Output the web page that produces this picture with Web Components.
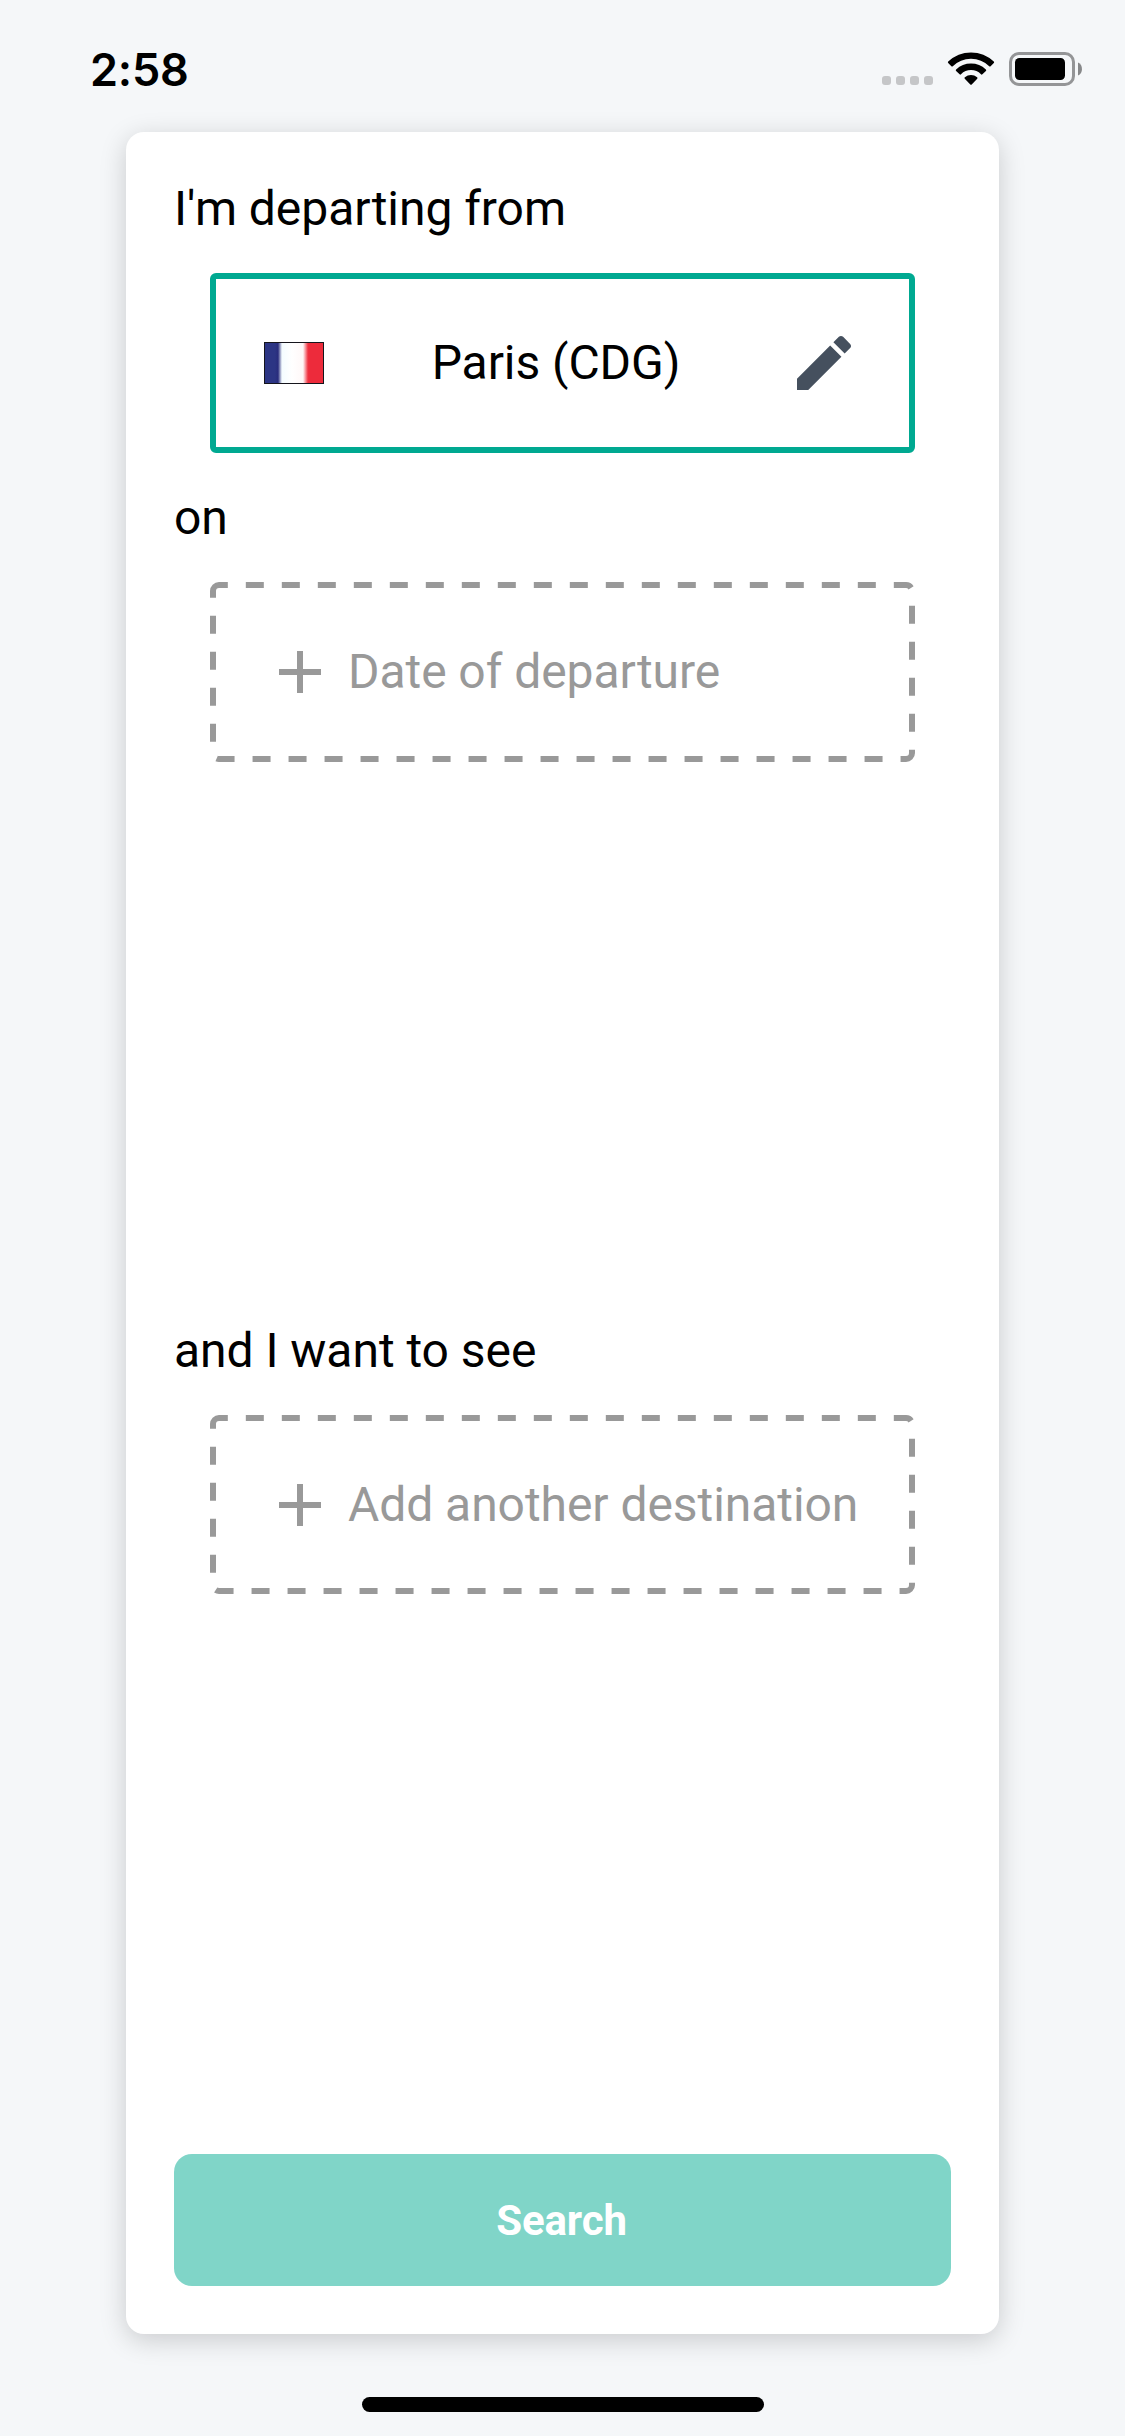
<!DOCTYPE html>
<html lang="en">
<head>
<meta charset="utf-8">
<title>Trip search</title>
<style>
  html, body { margin: 0; height: 100%; }
  body { background: #f5f7f9; font-family: Roboto, sans-serif; color: #000; }
</style>
</head>
<body>
<trip-screen>
  <status-bar slot="status" time="2:58"></status-bar>
  <trip-card>
    <form-section label="I'm departing from">
      <place-field>Paris (CDG)</place-field>
    </form-section>
    <form-section label="on" style="height:797px">
      <add-field height="180">Date of departure</add-field>
    </form-section>
    <form-section label="and I want to see">
      <add-field height="179">Add another destination</add-field>
    </form-section>
    <search-button slot="action">Search</search-button>
  </trip-card>
</trip-screen>

<script>
function define(name, html, init) {
  customElements.define(name, class extends HTMLElement {
    connectedCallback() {
      if (this.shadowRoot) return;
      const root = this.attachShadow({ mode: 'open' });
      root.innerHTML = html;
      if (init) init(this, root);
    }
  });
}

define('trip-screen', `
  <style>
    :host { display: flex; flex-direction: column; width: 1125px; height: 2436px; background: #f5f7f9; overflow: hidden; }
    main { padding: 0 126px; height: 2202px; display: flex; }
    ::slotted(trip-card) { flex: 1; }
    .home { width: 402px; height: 15px; border-radius: 8px; background: #000; margin: 63px 0 0 362px; }
  </style>
  <slot name="status"></slot>
  <main><slot></slot></main>
  <div class="home"></div>`);

define('status-bar', `
  <style>
    :host { display: flex; justify-content: space-between; box-sizing: border-box; height: 132px; padding: 51px 43px 0 90px; }
    .time { font: 600 45px/54px Inter, sans-serif; margin-top: -8px; letter-spacing: -0.2px; }
    .icons { display: flex; align-items: flex-start; }
    .dots { display: flex; gap: 5px; margin: 25px 14px 0 0; }
    .dots i { width: 9px; height: 9px; border-radius: 3px; background: #c5c6c8; }
    svg { display: block; }
    .battery { margin-left: 14px; }
  </style>
  <div class="time"></div>
  <div class="icons">
    <div class="dots"><i></i><i></i><i></i><i></i></div>
    <svg width="48" height="36" viewBox="0 0 48 36">
      <g transform="translate(24 34)" stroke="#000" stroke-width="2" stroke-linejoin="round">
        <path d="M-22.1 -22.7A32 32 0 0 1 22.1 -22.7L18.9 -19.5A26.7 26.7 0 0 0 -18.9 -19.5Z"/>
        <path d="M-14.2 -14.8A20.7 20.7 0 0 1 14.2 -14.8L10.7 -11.4A15 15 0 0 0 -10.7 -11.4Z"/>
        <path d="M-5.5 -7A9 9 0 0 1 5.5 -7L0 -1.2Z"/>
      </g>
    </svg>
    <svg class="battery" width="73" height="36" viewBox="0 0 73 36">
      <rect x="1.5" y="2.5" width="63" height="31" rx="8.5" fill="none" stroke="#949597" stroke-width="3"/>
      <rect x="6" y="7" width="50" height="22" rx="4.5"/>
      <path d="M69 11.5C74.3 13.5 74.3 22.500 69 24.500Z" fill="#87888a"/>
    </svg>
  </div>`, (el, root) => { root.querySelector('.time').textContent = el.getAttribute('time'); });

define('trip-card', `
  <style>
    :host { display: flex; flex-direction: column; gap: 36px; box-sizing: border-box; padding: 48px; background: #fff; border-radius: 18px; box-shadow: 0 6px 27px rgba(0,6,12,.18); }
    .action { margin-top: auto; }
  </style>
  <slot></slot>
  <div class="action"><slot name="action"></slot></div>`);

define('form-section', `
  <style>
    :host { display: flex; flex-direction: column; gap: 36px; }
    .label { font-size: 48px; line-height: 57px; white-space: nowrap; letter-spacing: -0.04px; }
    .field { padding: 0 36px; }
  </style>
  <div class="label"></div>
  <div class="field"><slot></slot></div>`, (el, root) => { root.querySelector('.label').textContent = el.getAttribute('label'); });

define('place-field', `
  <style>
    :host { display: flex; align-items: center; justify-content: space-between; box-sizing: border-box; height: 180px; padding: 0 49px 0 48px; border: 6px solid #00a991; border-radius: 6px; font-size: 48px; line-height: 57px; letter-spacing: -0.06px; white-space: nowrap; }
    .flag { box-sizing: border-box; width: 60px; height: 42px; border: 1px solid #15151c;
      background: linear-gradient(90deg, #2c3584 0 10px, #292c7c 13px, #f4fcff 17px, #fff 27px, #fff8f8 38px, #f0313f 43px, #ed2b3b 45px); }
    .name { padding-bottom: 2px; }
    svg { display: block; }
  </style>
  <div class="flag"></div>
  <div class="name"><slot></slot></div>
  <svg width="72" height="72" viewBox="0 0 24 24" fill="#45505e"><path d="M3 17.25V21h3.75L17.81 9.94l-3.75-3.75L3 17.25zM20.71 7.04c.39-.39.39-1.02 0-1.41l-2.34-2.34c-.39-.39-1.02-.39-1.41 0l-1.83 1.83 3.75 3.75 1.83-1.83z"/></svg>`);

define('add-field', `
  <style>
    :host { display: grid; color: #999; font-size: 48px; line-height: 57px; letter-spacing: -0.06px; white-space: nowrap; }
    .outline, .row { grid-area: 1 / 1; }
    svg { display: block; }
    .row { display: flex; align-items: flex-start; gap: 12px; padding: 54px 54px 0; }
    .text { margin-top: 7px; }
  </style>
  <svg class="outline" width="705" fill="none" stroke="#999" stroke-width="6" stroke-dasharray="18"><path/></svg>
  <div class="row">
    <svg width="72" height="72" viewBox="0 0 24 24" fill="#999"><path d="M19 13h-6v6h-2v-6H5v-2h6V5h2v6h6z"/></svg>
    <span class="text"><slot></slot></span>
  </div>`, (el, root) => {
    const h = +el.getAttribute('height');
    const svg = root.querySelector('.outline');
    svg.setAttribute('height', h);
    // the dash pattern starts where the top-left corner arc begins and runs clockwise
    svg.querySelector('path').setAttribute('d',
      `M3 9a6 6 0 0 1 6-6H696a6 6 0 0 1 6 6V${h - 9}a6 6 0 0 1-6 6H9a6 6 0 0 1-6-6Z`);
  });

define('search-button', `
  <style>
    :host { display: block; }
    button { display: flex; align-items: center; justify-content: center; width: 100%; height: 132px; padding: 0 2px 0 0; border: 0; border-radius: 18px; background: #80d5c8; color: #fff; font: 700 42px/49px Roboto, sans-serif; letter-spacing: -0.15px; }
  </style>
  <button type="button"><slot></slot></button>`);
</script>
</body>
</html>
